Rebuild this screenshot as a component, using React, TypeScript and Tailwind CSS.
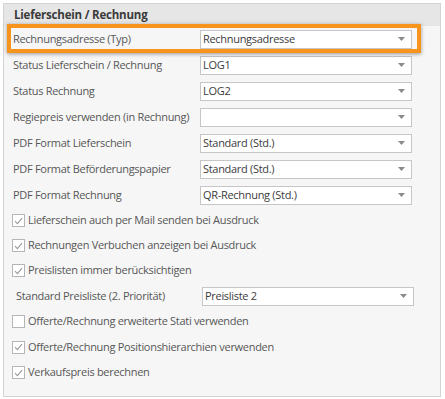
import React from 'react';

const COMBOS = [
  { label: 'Rechnungsadresse (Typ)', value: 'Rechnungsadresse' },
  { label: 'Status Lieferschein / Rechnung', value: 'LOG1' },
  { label: 'Status Rechnung', value: 'LOG2' },
  { label: 'Regiepreis verwenden (in Rechnung)', value: '' },
  { label: 'PDF Format Lieferschein', value: 'Standard (Std.)' },
  { label: 'PDF Format Beförderungspapier', value: 'Standard (Std.)' },
  { label: 'PDF Format Rechnung', value: 'QR-Rechnung (Std.)' },
];

function Combo({ value, className = '' }: { value: string; className?: string }) {
  return (
    <div className={`h-[19px] bg-white border border-[#c6c6c6] flex items-center pl-[2px] pr-[6px] ${className}`}>
      <span className="flex-1 text-[#3c3c3c] truncate">{value}</span>
      <svg width="7" height="4" viewBox="0 0 7 4" className="shrink-0">
        <path d="M0 0 H7 L3.5 4 Z" fill="#8a8a8a" />
      </svg>
    </div>
  );
}

function Check({ checked, label }: { checked: boolean; label: string }) {
  return (
    <div className="flex items-center pl-[8px] gap-[3px]">
      <div className="w-[13px] h-[13px] bg-white border border-[#b5b5b5] flex items-center justify-center">
        {checked && (
          <svg width="9" height="8" viewBox="0 0 9 8">
            <path d="M1 4.2 L3.4 6.6 L8 1.2" stroke="#9a9a9a" strokeWidth="1.1" fill="none" />
          </svg>
        )}
      </div>
      <span>{label}</span>
    </div>
  );
}

export default function App() {
  return (
    <div className="w-[445px] h-[399px] bg-white p-[3px] pr-[4px] pb-[2px]" style={{ fontFamily: '"Open Sans", "Noto Sans", sans-serif' }}>
      <div className="relative w-[438px] h-[394px] bg-[#f6f6f6] border border-[#d3d3d3] text-[11px] text-[#575757] tracking-[-0.3px]">
        {/* Header */}
        <div className="h-[22px] bg-[#e6e6e6] flex items-center pl-[10px] font-bold text-[#3a3a3a] text-[11.5px] tracking-[-0.2px]">
          Lieferschein / Rechnung
        </div>

        {/* Combo rows */}
        {COMBOS.map((c) => (
          <div key={c.label} className="h-[26px] flex items-center pl-[9px]">
            <span className="w-[187px] shrink-0">{c.label}</span>
            <Combo value={c.value} className="w-[212px]" />
          </div>
        ))}

        <div className="h-[25px] flex items-center"><Check checked label="Lieferschein auch per Mail senden bei Ausdruck" /></div>
        <div className="h-[25px] flex items-center"><Check checked label="Rechnungen Verbuchen anzeigen bei Ausdruck" /></div>
        <div className="h-[25px] flex items-center"><Check checked label="Preislisten immer berücksichtigen" /></div>
        <div className="h-[26px] flex items-center pl-[12px]">
          <span className="w-[186px] shrink-0">Standard Preisliste (2. Priorität)</span>
          <Combo value="Preisliste 2" className="w-[212px]" />
        </div>
        <div className="h-[25px] flex items-center"><Check checked={false} label="Offerte/Rechnung erweiterte Stati verwenden" /></div>
        <div className="h-[26px] flex items-center"><Check checked label="Offerte/Rechnung Positionshierarchien verwenden" /></div>
        <div className="h-[25px] flex items-center"><Check checked label="Verkaufspreis berechnen" /></div>

        {/* Orange highlight */}
        <div className="absolute left-[3px] top-[20px] w-[414px] h-[29px] border-[4px] border-[#f7941d] shadow-[0_1px_4px_rgba(0,0,0,0.4)] pointer-events-none" />
      </div>
    </div>
  );
}
